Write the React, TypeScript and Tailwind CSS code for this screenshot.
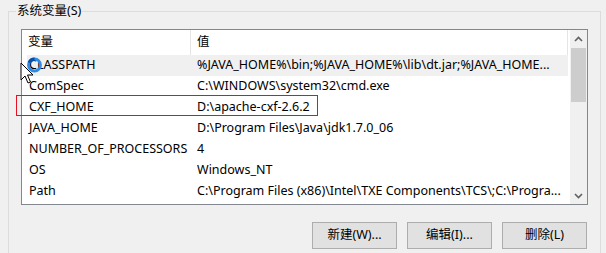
import React from "react";

const rows: [string, string][] = [
  ["CLASSPATH", "%JAVA_HOME%\\bin;%JAVA_HOME%\\lib\\dt.jar;%JAVA_HOME..."],
  ["ComSpec", "C:\\WINDOWS\\system32\\cmd.exe"],
  ["CXF_HOME", "D:\\apache-cxf-2.6.2"],
  ["JAVA_HOME", "D:\\Program Files\\Java\\jdk1.7.0_06"],
  ["NUMBER_OF_PROCESSORS", "4"],
  ["OS", "Windows_NT"],
  ["Path", "C:\\Program Files (x86)\\Intel\\TXE Components\\TCS\\;C:\\Progra..."],
];

const font = { fontFamily: '"Noto Sans", "Noto Sans CJK SC", sans-serif' };

const Chevron = ({ up }: { up?: boolean }) => (
  <svg width="9" height="6" viewBox="0 0 9 6" className={up ? "" : "rotate-180"}>
    <path d="M1 5 L4.5 1.5 L8 5" fill="none" stroke="#606060" strokeWidth="1.6" />
  </svg>
);

const Btn = ({ label }: { label: string }) => (
  <button className="w-[85px] h-[27px] border border-[#adadad] bg-[#e1e1e1] text-[12.5px] text-black leading-none">
    {label}
  </button>
);

export default function App() {
  return (
    <div
      className="relative w-[606px] h-[253px] bg-[#f0f0f0] overflow-hidden text-[12.5px] text-black"
      style={font}
    >
      <fieldset className="mt-[3px] ml-[8px] mr-[5px] h-[250px] border border-b-0 border-[#dcdcdc] pl-[7px] pr-[12px]">
        <legend className="px-[1px] leading-[16px] text-black">系统变量(S)</legend>
        <div className="ml-[5px] mt-[10px] w-[567px] h-[176px] border border-[#828790] bg-white flex">
          <div className="w-[548px] flex flex-col">
            <div className="flex h-[25px] items-center">
              <div className="w-[169px] h-full pl-[6px] flex items-center border-r border-[#e5e5e5]">变量</div>
              <div className="w-[377px] h-full pl-[6px] flex items-center border-r border-[#e5e5e5]">值</div>
            </div>
            {rows.map(([name, value], i) => (
              <div
                key={name}
                className={`ml-[5px] w-[541px] h-[21px] flex items-center ${i === 0 ? "bg-[#f0f0f0]" : ""}`}
              >
                <div className="w-[163px] pl-[2px] whitespace-nowrap">{name}</div>
                <div className="w-[378px] pl-[7px] whitespace-nowrap">{value}</div>
              </div>
            ))}
          </div>
          <div className="w-[17px] bg-[#f0f0f0] flex flex-col items-center">
            <div className="h-[17px] w-full flex items-center justify-center">
              <Chevron up />
            </div>
            <div className="mt-[1px] w-[15px] h-[54px] bg-[#cdcdcd]" />
            <div className="flex-1" />
            <div className="h-[17px] w-full flex items-center justify-center">
              <Chevron />
            </div>
          </div>
        </div>
        <div className="mt-[17px] mr-[1px] flex justify-end gap-[10px]">
          <Btn label="新建(W)..." />
          <Btn label="编辑(I)..." />
          <Btn label="删除(L)" />
        </div>
      </fieldset>

      {/* red highlight drawn over the CXF_HOME row */}
      <div className="absolute left-[16px] top-[95px] w-[302px] h-[21px] border border-[#e81123]" />

      {/* busy cursor */}
      <svg className="absolute left-[20px] top-[56px]" width="26" height="30" viewBox="0 0 26 30">
        <path d="M1 7 L1 24 L5 20 L8 27 L10.5 26 L7.5 19 L13 19 Z" fill="#fff" stroke="#000" strokeWidth="1" />
        <circle cx="14.5" cy="9" r="6" fill="none" stroke="#2a8ce8" strokeWidth="2.8" />
        <path d="M9 6.5 A6 6 0 0 1 14.5 3" fill="none" stroke="#0a4ea8" strokeWidth="2.8" />
      </svg>
    </div>
  );
}
